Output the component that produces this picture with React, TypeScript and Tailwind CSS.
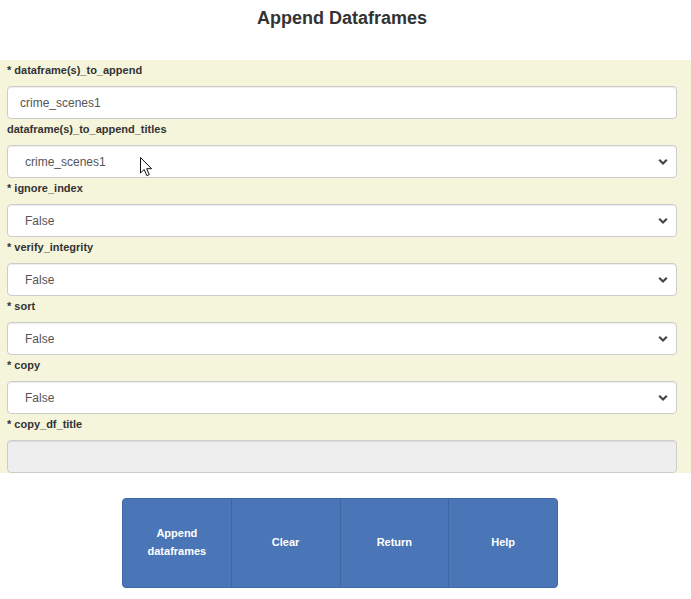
import React from "react";

type Field = {
    name: string
    required: boolean
    kind: "input" | "select" | "disabled"
    value: string
}

const fields: Field[] = [
    { name: "dataframe(s)_to_append", required: true, kind: "input", value: "crime_scenes1" },
    { name: "dataframe(s)_to_append_titles", required: false, kind: "select", value: "crime_scenes1" },
    { name: "ignore_index", required: true, kind: "select", value: "False" },
    { name: "verify_integrity", required: true, kind: "select", value: "False" },
    { name: "sort", required: true, kind: "select", value: "False" },
    { name: "copy", required: true, kind: "select", value: "False" },
    { name: "copy_df_title", required: true, kind: "disabled", value: "" },
]

const buttons = ["Append dataframes", "Clear", "Return", "Help"]

function Chevron() {
    return (
        <svg className="pointer-events-none absolute right-[9px] top-1/2 -translate-y-1/2" width="10" height="7" viewBox="0 0 10 7">
            <path d="M1.2 1.3 L5 5 L8.8 1.3" fill="none" stroke="#444" strokeWidth="2.2" />
        </svg>
    )
}

function Cursor() {
    return (
        <svg className="absolute left-[140px] top-[157px]" width="13" height="20" viewBox="0 0 13 20">
            <path d="M0.5 0.5 L0.5 16 L4.2 12.5 L6.8 18.6 L9.2 17.6 L6.7 11.7 L11.6 11.7 Z" fill="#fff" stroke="#111" strokeWidth="1" strokeLinejoin="round" />
        </svg>
    )
}

export default function App() {
    return (
        <div className="relative w-[691px] h-[599px] bg-white overflow-hidden" style={{ fontFamily: '"Liberation Sans", Arial, sans-serif' }}>
            <div className="w-[684px] h-[60px] pt-[7px] text-center">
                <h1 className="text-[18px] leading-[22px] font-bold text-[#333]">Append Dataframes</h1>
            </div>

            <div className="bg-[#f5f5dc] pl-[7px] pr-[14px]">
                {fields.map((f) => (
                    <div key={f.name}>
                        <label className="block h-[26px] pt-[1px] leading-[18px] text-[11px] font-bold text-[#333]">
                            {f.required ? "* " : ""}{f.name}
                        </label>
                        {f.kind === "input" && (
                            <input
                                className="block w-full h-[33px] rounded-[4px] border border-[#ccc] bg-white pl-[12px] text-[12px] text-[#555] shadow-[inset_0_1px_1px_rgba(0,0,0,0.075)] outline-none"
                                defaultValue={f.value}
                                type="text"
                            />
                        )}
                        {f.kind === "select" && (
                            <div className="relative">
                                <select
                                    className="block w-full h-[33px] appearance-none rounded-[4px] border border-[#ccc] bg-white pl-[17px] text-[12px] text-[#555] shadow-[inset_0_1px_1px_rgba(0,0,0,0.075)] outline-none"
                                    defaultValue={f.value}
                                >
                                    <option value={f.value}>{f.value}</option>
                                </select>
                                <Chevron />
                            </div>
                        )}
                        {f.kind === "disabled" && (
                            <input
                                className="block w-full h-[33px] rounded-[4px] border border-[#ccc] bg-[#eee] pl-[12px] text-[12px] shadow-[inset_0_1px_1px_rgba(0,0,0,0.075)] outline-none"
                                disabled
                                type="text"
                            />
                        )}
                    </div>
                ))}
            </div>

            <div className="w-[680px] flex justify-center pt-[25px]">
                <div className="flex w-[436px] h-[90px] rounded-[4px] overflow-hidden border border-[#3f68a8] bg-[#4a75b7]">
                    {buttons.map((b, i) => (
                        <button
                            key={b}
                            className={
                                "flex-1 flex items-center justify-center px-[18px] pb-[3px] text-[11px] font-bold leading-[18px] text-white text-center " +
                                (i > 0 ? "border-l border-[#3f66a5]" : "")
                            }
                        >
                            {b}
                        </button>
                    ))}
                </div>
            </div>

            <Cursor />
        </div>
    )
}
